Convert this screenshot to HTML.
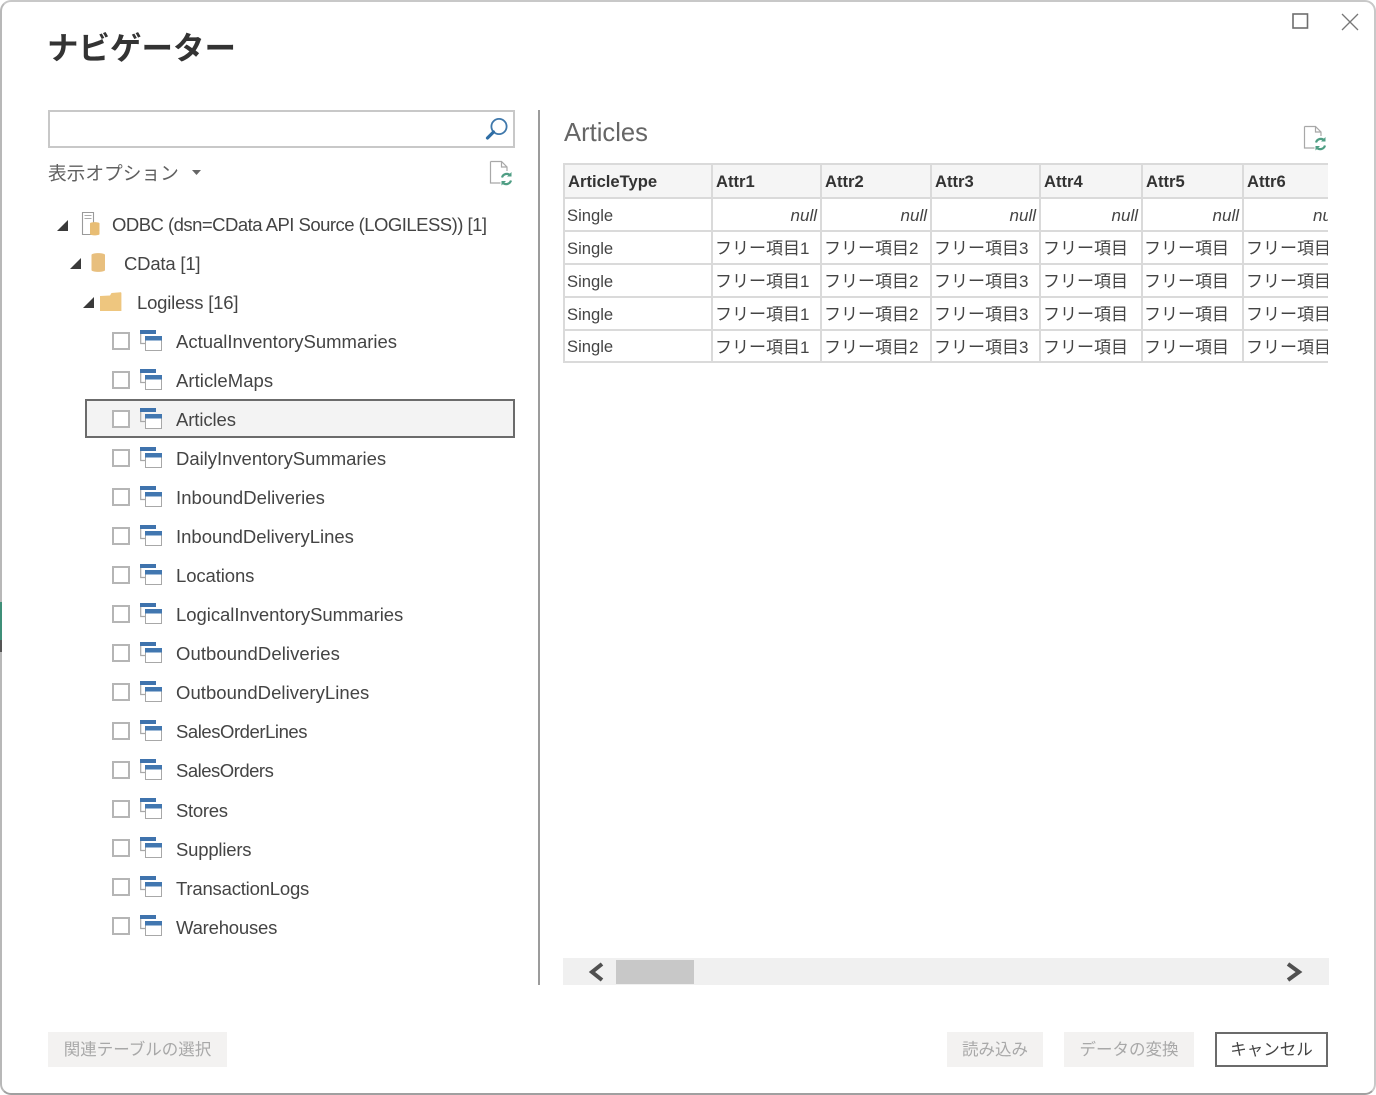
<!DOCTYPE html>
<html lang="ja"><head><meta charset="utf-8"><title>ナビゲーター</title>
<style>
html,body{margin:0;padding:0;width:1376px;height:1095px;overflow:hidden;background:#fff}
body{position:relative;font-family:"Liberation Sans","Noto Sans CJK JP",sans-serif;color:#404040}
#frame{position:absolute;left:0;top:0;width:1376px;height:1095px;box-sizing:border-box;border:2px solid #c8c8c8;border-bottom-color:#a0a0a0;border-left-color:#b8b8b8;border-radius:11px;background:#fff}
.a{position:absolute;white-space:nowrap}
.t{position:absolute;white-space:nowrap;font-size:18.5px;line-height:24px;color:#444}
.cb{position:absolute;left:112px;width:14px;height:14px;border:2px solid #b5b5b5;background:#fff}
.ti{position:absolute;left:140px;width:23px;height:23px}
.hc{position:absolute;font-size:16.6px;font-weight:bold;line-height:22px;color:#333;white-space:nowrap}
.c{position:absolute;font-size:16.6px;line-height:22px;color:#444;white-space:nowrap}
.j{font-size:17px}
.n{font-style:italic;text-align:right;font-size:17px}
.btn{position:absolute;top:1032px;height:35px;box-sizing:border-box;background:#f3f2f1;color:#a8a8a8;font-size:16.500px;line-height:36px;text-align:center;white-space:nowrap}
</style></head><body>
<div id="frame"></div>
<div class="a" style="left:0;top:602px;width:2px;height:50px;background:#3f8f78"></div>
<div class="a" style="left:0;top:640px;width:2px;height:12px;background:#555"></div>

<svg class="a" style="left:1290px;top:10px" width="70" height="24" fill="none" stroke="#6e6e6e" stroke-width="1.6"><rect x="3" y="4" width="14.5" height="14"/><path d="M52 4l16 16M68 4L52 20" stroke="#777" stroke-width="1.3"/></svg>

<div class="a" style="left:47px;top:29px;font-size:31.500px;line-height:38px;font-weight:bold;color:#333">ナビゲーター</div>

<div class="a" style="left:48px;top:110px;width:467px;height:38px;box-sizing:border-box;border:2px solid #c8c8c8"></div>
<svg class="a" style="left:484px;top:116px" width="26" height="26" fill="none"><circle cx="15" cy="10.5" r="7.6" stroke="#3f78ab" stroke-width="1.8"/><path d="M9.5 16L3.5 22" stroke="#2f6ea5" stroke-width="3.2" stroke-linecap="round"/></svg>

<div class="a" style="left:48px;top:162px;font-size:18.700px;line-height:24px;color:#606060">表示オプション</div>
<svg class="a" style="left:191px;top:169px" width="12" height="8"><path d="M1 1h9l-4.500 5z" fill="#666"/></svg>

<svg class="a" style="left:488px;top:159px" width="28" height="28" fill="none"><path d="M2.500 2.500h11l5.500 5.500v4M13.500 2.500v5.500h5.500M2.500 2.500v21.500h10" stroke="#a8a8a8" stroke-width="1.200"/><path d="M14 18.500a5 5 0 0 1 8.500-2M23 21.500a5 5 0 0 1-8.500 2" stroke="#4f9e84" stroke-width="2.200"/><path d="M23.500 13v4.500h-4.500zM13.500 26.500v-4.500h4.500z" fill="#4f9e84"/></svg>

<svg class="a" style="left:55px;top:216px" width="40" height="24"><path d="M13 4v11H2z" fill="#3a3a3a"/></svg>
<svg class="a" style="left:79px;top:211px" width="24" height="26" fill="none"><path d="M3.500 1.500h11v22h-11z" stroke="#9a9a9a" fill="#fff" stroke-width="1.100"/><path d="M5.500 4.500h7M5.500 7.500h7" stroke="#aaa" stroke-width="1.100"/><path d="M11 12.500c0-1.800 9.500-1.800 9.500 0v10.500c0 1.800-9.500 1.800-9.500 0z" fill="#e8bd74"/></svg>
<div class="t" style="left:112px;top:213px;letter-spacing:-.52px">ODBC (dsn=CData API Source (LOGILESS)) [1]</div>

<svg class="a" style="left:68px;top:255px" width="16" height="18"><path d="M13 3v11H2z" fill="#3a3a3a"/></svg>
<svg class="a" style="left:90px;top:252px" width="18" height="22"><path d="M1.500 3c0-2.500 13.500-2.500 13.500 0v15c0 2.500-13.500 2.500-13.500 0z" fill="#e8bf7e"/></svg>
<div class="t" style="left:124px;top:252px;letter-spacing:-.2px">CData [1]</div>

<svg class="a" style="left:81px;top:294px" width="16" height="18"><path d="M13 3v11H2z" fill="#3a3a3a"/></svg>
<svg class="a" style="left:100px;top:291px" width="24" height="22"><path d="M0 5l10-.5 1.500-2.500 9-.8c.5 0 .9.300.9.800V20H0z" fill="#eec67f"/></svg>
<div class="t" style="left:137px;top:291px;letter-spacing:-.2px">Logiless [16]</div>

<div class="a" style="left:85px;top:399px;width:430px;height:39px;box-sizing:border-box;border:2px solid #6b6b6b;background:#f3f3f3"></div>

<svg width="0" height="0" style="position:absolute"><defs><g id="tb"><path d="M0 1h16v4H0z" fill="#3f73ad"/><path d="M.7 5v9.500H5" stroke="#a8a8a8" stroke-width="1.200" fill="none"/><rect x="5.500" y="7.500" width="16" height="14" fill="#fff" stroke="#a8a8a8"/><path d="M5 7h17v4.500H5z" fill="#4277b0"/></g></defs></svg>

<div class="cb" style="top:332px"></div><svg class="ti" style="top:329px"><use href="#tb"/></svg><div class="t" style="left:176px;top:330px">ActualInventorySummaries</div>
<div class="cb" style="top:371px"></div><svg class="ti" style="top:368px"><use href="#tb"/></svg><div class="t" style="left:176px;top:369px;letter-spacing:.05px">ArticleMaps</div>
<div class="cb" style="top:410px"></div><svg class="ti" style="top:407px"><use href="#tb"/></svg><div class="t" style="left:176px;top:408px;letter-spacing:-.1px">Articles</div>
<div class="cb" style="top:449px"></div><svg class="ti" style="top:446px"><use href="#tb"/></svg><div class="t" style="left:176px;top:447px;letter-spacing:-.03px">DailyInventorySummaries</div>
<div class="cb" style="top:488px"></div><svg class="ti" style="top:485px"><use href="#tb"/></svg><div class="t" style="left:176px;top:486px;letter-spacing:.05px">InboundDeliveries</div>
<div class="cb" style="top:527px"></div><svg class="ti" style="top:524px"><use href="#tb"/></svg><div class="t" style="left:176px;top:525px">InboundDeliveryLines</div>
<div class="cb" style="top:566px"></div><svg class="ti" style="top:563px"><use href="#tb"/></svg><div class="t" style="left:176px;top:564px;letter-spacing:-.1px">Locations</div>
<div class="cb" style="top:605px"></div><svg class="ti" style="top:602px"><use href="#tb"/></svg><div class="t" style="left:176px;top:603px;letter-spacing:-.04px">LogicalInventorySummaries</div>
<div class="cb" style="top:644px"></div><svg class="ti" style="top:641px"><use href="#tb"/></svg><div class="t" style="left:176px;top:642px;letter-spacing:.08px">OutboundDeliveries</div>
<div class="cb" style="top:683px"></div><svg class="ti" style="top:680px"><use href="#tb"/></svg><div class="t" style="left:176px;top:681px;letter-spacing:.05px">OutboundDeliveryLines</div>
<div class="cb" style="top:722px"></div><svg class="ti" style="top:719px"><use href="#tb"/></svg><div class="t" style="left:176px;top:720px;letter-spacing:-.45px">SalesOrderLines</div>
<div class="cb" style="top:761px"></div><svg class="ti" style="top:758px"><use href="#tb"/></svg><div class="t" style="left:176px;top:759px;letter-spacing:-.5px">SalesOrders</div>
<div class="cb" style="top:800px"></div><svg class="ti" style="top:797px"><use href="#tb"/></svg><div class="t" style="left:176px;top:799px;letter-spacing:-.3px">Stores</div>
<div class="cb" style="top:839px"></div><svg class="ti" style="top:836px"><use href="#tb"/></svg><div class="t" style="left:176px;top:838px;letter-spacing:-.2px">Suppliers</div>
<div class="cb" style="top:878px"></div><svg class="ti" style="top:875px"><use href="#tb"/></svg><div class="t" style="left:176px;top:877px;letter-spacing:-.2px">TransactionLogs</div>
<div class="cb" style="top:917px"></div><svg class="ti" style="top:914px"><use href="#tb"/></svg><div class="t" style="left:176px;top:916px;letter-spacing:-.2px">Warehouses</div>

<div class="a" style="left:538px;top:110px;width:2px;height:875px;background:#9c9c9c"></div>

<div class="a" style="left:564px;top:115px;font-size:25.600px;line-height:36px;color:#666">Articles</div>
<svg class="a" style="left:1302px;top:124px" width="28" height="28" fill="none"><path d="M2.500 2.500h11l5.500 5.500v4M13.500 2.500v5.500h5.500M2.500 2.500v21.500h10" stroke="#a8a8a8" stroke-width="1.200"/><path d="M14 18.500a5 5 0 0 1 8.500-2M23 21.500a5 5 0 0 1-8.500 2" stroke="#4f9e84" stroke-width="2.200"/><path d="M23.500 13v4.500h-4.500zM13.500 26.500v-4.500h4.500z" fill="#4f9e84"/></svg>

<div class="a" style="left:563px;top:163px;width:765px;height:200px;overflow:hidden">
<svg style="position:absolute;left:0;top:0" width="765" height="200">
<rect x="0" y="0" width="765" height="35" fill="#f5f5f5"/>
<g stroke="#dadada" stroke-width="2" fill="none">
<path d="M0 1H765M0 35H765M0 68H765M0 101H765M0 134H765M0 167H765M0 199H765"/>
<path d="M1 0V200M149 0V200M258 0V200M368 0V200M477 0V200M579 0V200M680 0V200"/>
</g></svg>
<div class="hc" style="left:5px;top:8px">ArticleType</div><div class="hc" style="left:153px;top:8px">Attr1</div><div class="hc" style="left:262px;top:8px">Attr2</div><div class="hc" style="left:372px;top:8px">Attr3</div><div class="hc" style="left:481px;top:8px">Attr4</div><div class="hc" style="left:583px;top:8px">Attr5</div><div class="hc" style="left:684px;top:8px">Attr6</div>

<div class="c" style="left:4px;top:42px">Single</div><div class="c n" style="left:150px;width:104px;top:42px">null</div><div class="c n" style="left:259px;width:105px;top:42px">null</div><div class="c n" style="left:369px;width:104px;top:42px">null</div><div class="c n" style="left:478px;width:97px;top:42px">null</div><div class="c n" style="left:580px;width:96px;top:42px">null</div><div class="c n" style="left:750px;top:42px">null</div>

<div class="c" style="left:4px;top:75px">Single</div><div class="c j" style="left:152px;top:75px">フリー項目1</div><div class="c j" style="left:261px;top:75px">フリー項目2</div><div class="c j" style="left:371px;top:75px">フリー項目3</div><div class="c j" style="left:480px;top:75px">フリー項目</div><div class="c j" style="left:581px;top:75px">フリー項目</div><div class="c j" style="left:683px;top:75px">フリー項目</div>
<div class="c" style="left:4px;top:108px">Single</div><div class="c j" style="left:152px;top:108px">フリー項目1</div><div class="c j" style="left:261px;top:108px">フリー項目2</div><div class="c j" style="left:371px;top:108px">フリー項目3</div><div class="c j" style="left:480px;top:108px">フリー項目</div><div class="c j" style="left:581px;top:108px">フリー項目</div><div class="c j" style="left:683px;top:108px">フリー項目</div>
<div class="c" style="left:4px;top:141px">Single</div><div class="c j" style="left:152px;top:141px">フリー項目1</div><div class="c j" style="left:261px;top:141px">フリー項目2</div><div class="c j" style="left:371px;top:141px">フリー項目3</div><div class="c j" style="left:480px;top:141px">フリー項目</div><div class="c j" style="left:581px;top:141px">フリー項目</div><div class="c j" style="left:683px;top:141px">フリー項目</div>
<div class="c" style="left:4px;top:173px">Single</div><div class="c j" style="left:152px;top:174px">フリー項目1</div><div class="c j" style="left:261px;top:174px">フリー項目2</div><div class="c j" style="left:371px;top:174px">フリー項目3</div><div class="c j" style="left:480px;top:174px">フリー項目</div><div class="c j" style="left:581px;top:174px">フリー項目</div><div class="c j" style="left:683px;top:174px">フリー項目</div>
</div>

<div class="a" style="left:563px;top:958px;width:766px;height:27px;background:#f0f0f0"></div>
<div class="a" style="left:616px;top:960px;width:78px;height:24px;background:#c8c8c8"></div>
<svg class="a" style="left:586px;top:961px" width="20" height="22" fill="none" stroke="#505050" stroke-width="4"><path d="M16 3L6 11l10 8"/></svg>
<svg class="a" style="left:1284px;top:961px" width="20" height="22" fill="none" stroke="#505050" stroke-width="4"><path d="M4 3l11 8-11 8"/></svg>

<div class="btn" style="left:48px;width:179px">関連テーブルの選択</div>
<div class="btn" style="left:947px;width:96px">読み込み</div>
<div class="btn" style="left:1064px;width:130px">データの変換</div>
<div class="btn" style="left:1215px;width:113px;background:#fff;border:2px solid #6b6b6b;color:#444;line-height:32px">キャンセル</div>
</body></html>
